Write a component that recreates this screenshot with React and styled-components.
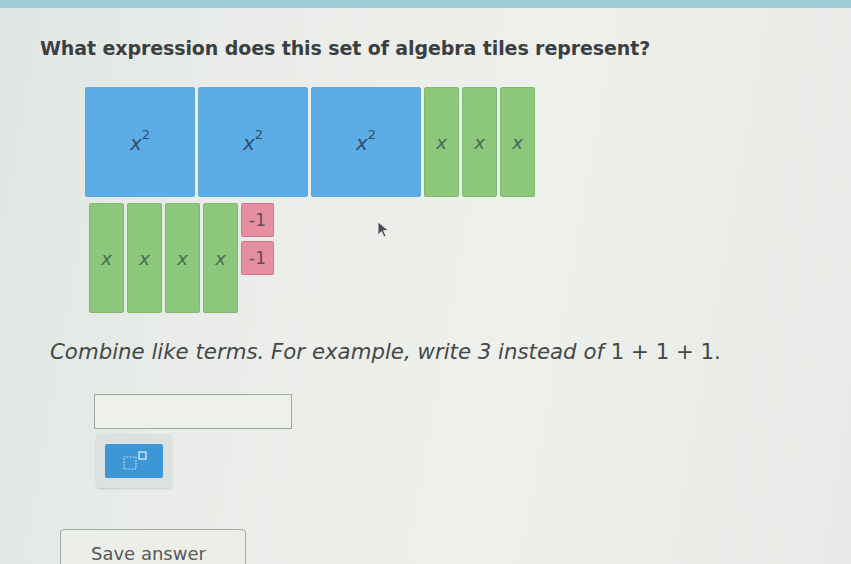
import React from "react";
import styled, { createGlobalStyle } from "styled-components";

const Global = createGlobalStyle`
body {
  margin:0;
  background:#e9ebe7;
  font-family:"DejaVu Sans", Verdana, sans-serif;
}
`

const Page = styled.div`
width:851px;
height:564px;
overflow:hidden;
background:linear-gradient(100deg, #dfe6e2 0%, #e9ece8 25%, #eef0ec 60%, #e7eae6 100%);
border-top:8px solid #9ecbd8;
box-sizing:border-box;
`

const Question = styled.h1`
margin:29px 0 0 40px;
font-size:19px;
font-weight:bold;
color:#3c3f41;
letter-spacing:-0.1px;
`

const Tiles = styled.div`
margin:28px 0 0 85px;
display:flex;
flex-direction:column;
gap:6px;
`

const Row = styled.div`
display:flex;
gap:3px;
align-items:flex-start;
padding-left:${p => p.$indent || 0}px;
`

const Tile = styled.div`
display:flex;
align-items:center;
justify-content:center;
width:${p => p.$w}px;
height:${p => p.$h}px;
background:${p => p.$bg};
border:1px solid ${p => p.$edge};
border-radius:2px;
box-sizing:border-box;
font-family:"DejaVu Sans", Verdana, sans-serif;
font-size:${p => p.$size || 18}px;
color:${p => p.$ink};
`

const Var = styled.span`
font-style:italic;
sup {
  font-size:13px;
  font-style:normal;
  position:relative;
  top:-3px;
}
`

const Ones = styled.div`
display:flex;
flex-direction:column;
gap:4px;
`

const Cursor = styled.svg`
margin:18px 0 0 100px;
`

const Hint = styled.p`
margin:26px 0 0 50px;
font-size:21.3px;
font-style:italic;
color:#454849;
`

const Num = styled.span`
font-style:normal;
font-family:"DejaVu Sans", sans-serif;
`

const Answer = styled.div`
margin:30px 0 0 94px;
width:198px;
height:35px;
border:1px solid #9aa7a3;
background:#eef0ec;
box-sizing:border-box;
`

const Tools = styled.div`
margin:5px 0 0 96px;
width:76px;
height:54px;
padding:10px 9px;
box-sizing:border-box;
background:#dde2e1;
border-radius:4px;
box-shadow:0 1px 2px rgba(0,0,0,0.15);
`

const ToolButton = styled.div`
width:58px;
height:34px;
background:#3d97d6;
border-radius:2px;
display:flex;
align-items:center;
justify-content:center;
`

const Save = styled.button`
margin:41px 0 0 60px;
width:186px;
height:46px;
padding:2px 0 0 30px;
text-align:left;
vertical-align:top;
background:#eceeea;
border:1px solid #a4aaa7;
border-radius:4px;
font-family:"DejaVu Sans", Verdana, sans-serif;
font-size:18px;
color:#555a5b;
`

const Blue = p => <Tile $w={110} $h={110} $bg="#5cade5" $edge="#62a9da" $ink="#2c4d72" $size={20} {...p} />
const Green = p => <Tile $w={35} $h={110} $bg="#8cc77c" $edge="#80b870" $ink="#4d6753" $size={18} {...p} />
const Pink = p => <Tile $w={33} $h={34} $bg="#e58fa1" $edge="#cf7a8d" $ink="#6a4a52" $size={17} {...p} />

const X2 = () => <Var>x<sup>2</sup></Var>
const X = () => <Var>x</Var>

export default function App() {
  return (
    <Page>
      <Global />
      <Question>What expression does this set of algebra tiles represent?</Question>
      <Tiles>
        <Row>
          <Blue><X2 /></Blue>
          <Blue><X2 /></Blue>
          <Blue><X2 /></Blue>
          <Green><X /></Green>
          <Green><X /></Green>
          <Green><X /></Green>
        </Row>
        <Row $indent={4}>
          <Green><X /></Green>
          <Green><X /></Green>
          <Green><X /></Green>
          <Green><X /></Green>
          <Ones>
            <Pink>-1</Pink>
            <Pink>-1</Pink>
          </Ones>
          <Cursor width="13" height="17" viewBox="0 0 13 17">
            <path d="M1 1 L1 14 L4.5 10.5 L7 16 L9 15 L6.5 9.5 L11.5 9.5 Z" fill="#4a4d52" stroke="#f2f2f2" strokeWidth="0.8" />
          </Cursor>
        </Row>
      </Tiles>
      <Hint>
        Combine like terms. For example, write 3 instead of <Num>1 + 1 + 1.</Num>
      </Hint>
      <Answer />
      <Tools>
        <ToolButton>
          <svg width="40" height="24" viewBox="0 0 40 24">
            <rect x="10" y="8" width="12" height="12" fill="none" stroke="#cfe6f5" strokeWidth="1.2" strokeDasharray="1.5 1.5" />
            <rect x="25" y="3" width="7" height="7" fill="#3d97d6" stroke="#e6f2fa" strokeWidth="1.2" />
          </svg>
        </ToolButton>
      </Tools>
      <Save>Save answer</Save>
    </Page>
  );
}
